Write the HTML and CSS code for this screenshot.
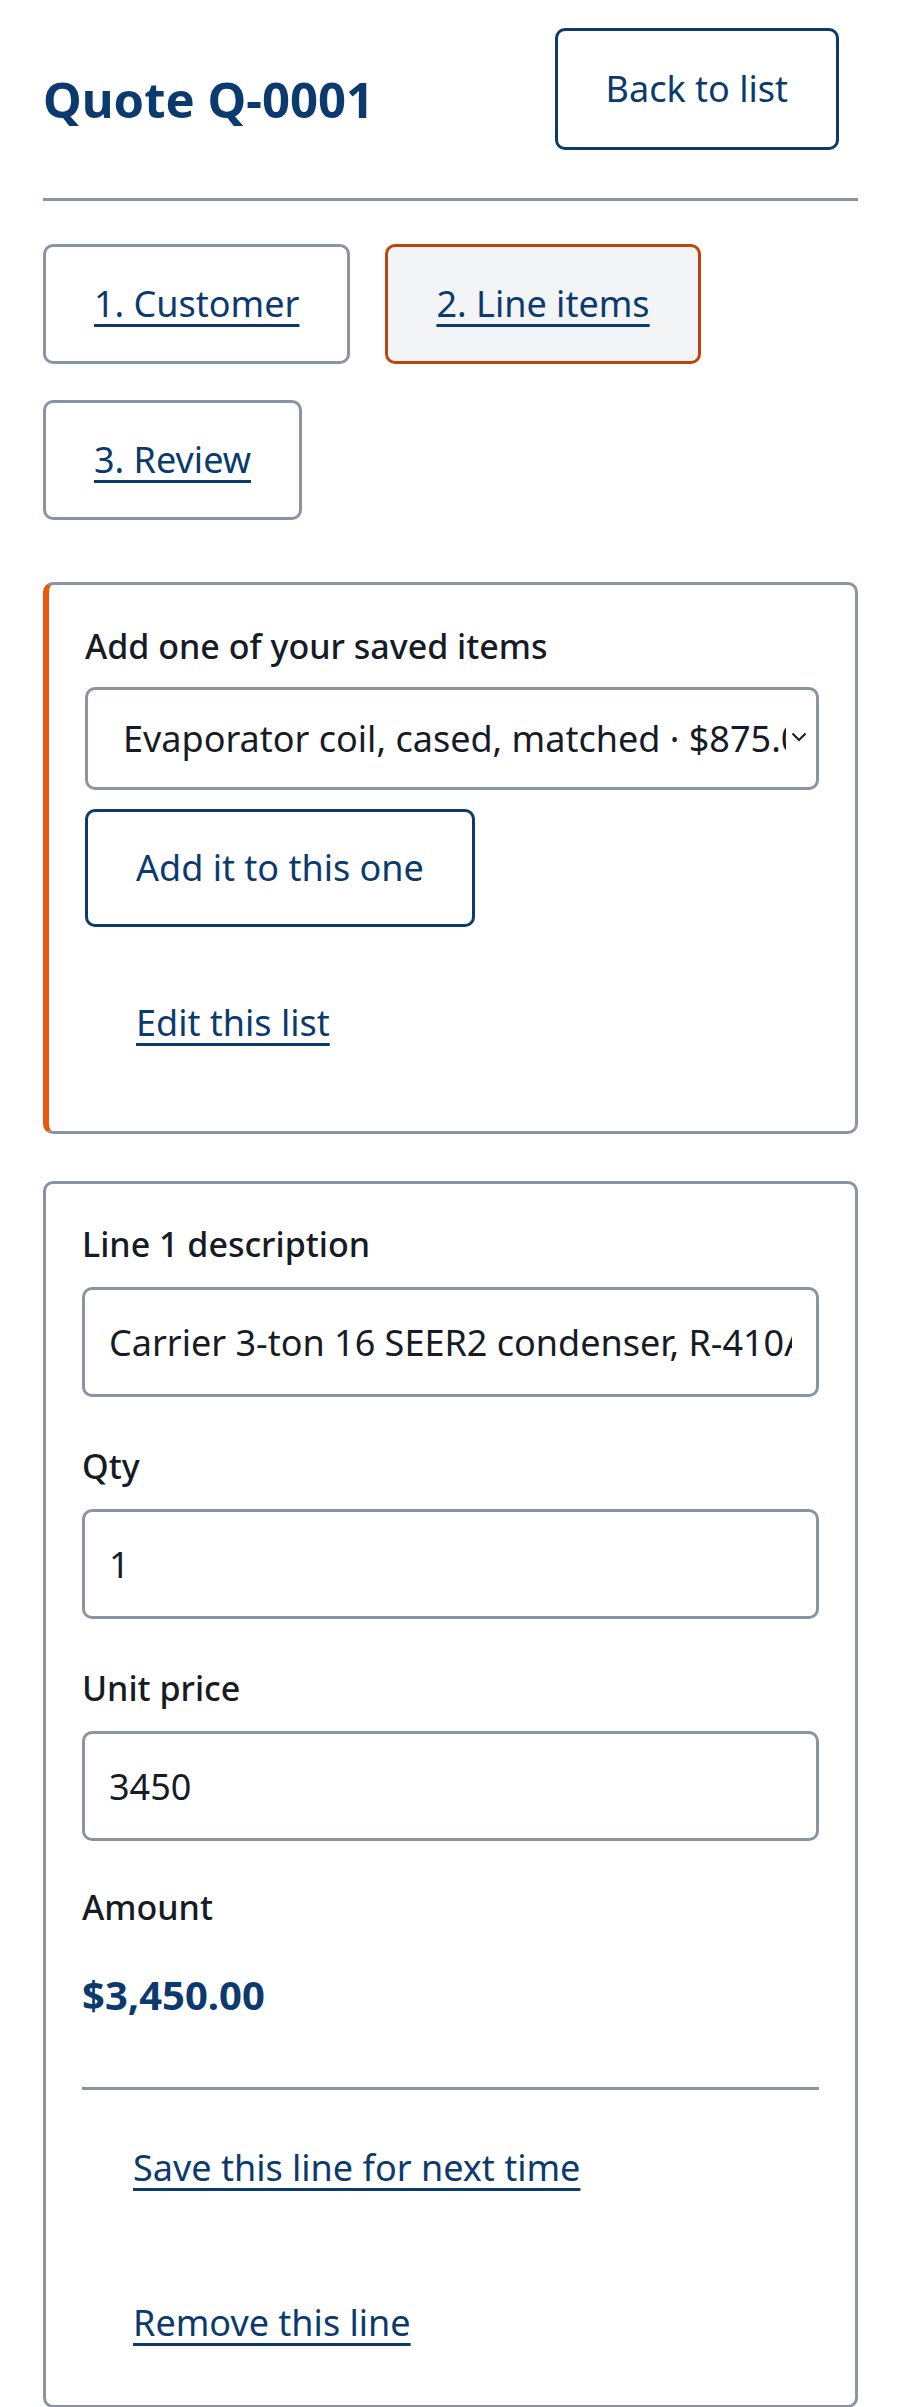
FILE: index.html
```html
<!DOCTYPE html>
<html lang="en">
<head>
    <meta charset="UTF-8">
    <meta name="viewport" content="width=device-width, initial-scale=1.0">
    <title>Quote Q-0001</title>
    <link rel="stylesheet" href="styles.css">
</head>
<body>
    <div class="page">
        <header class="top">
            <h1>Quote Q-0001</h1>
            <a class="btn back" href="#">Back to list</a>
        </header>

        <nav class="steps">
            <a class="btn tab" href="#">1. Customer</a>
            <a class="btn tab current" href="#">2. Line items</a>
            <a class="btn tab" href="#">3. Review</a>
        </nav>

        <section class="card saved">
            <label class="label" for="saved">Add one of your saved items</label>
            <div class="pick-wrap">
                <select id="saved" class="field pick">
                    <option>Evaporator coil, cased, matched · $875.00</option>
                    <option>Carrier 3-ton 16 SEER2 condenser · $3,450.00</option>
                    <option>Line set, 25 ft · $180.00</option>
                </select>
                <svg class="chevron" width="16" height="10" viewBox="0 0 16 10" aria-hidden="true">
                    <path d="M1.5 1.5 L8 8 L14.5 1.5" fill="none" stroke="#161b26" stroke-width="2"/>
                </svg>
            </div>
            <div class="actions">
                <button class="btn" type="button">Add it to this one</button>
                <a class="btn link" href="#">Edit this list</a>
            </div>
        </section>

        <section class="card line">
            <label class="label" for="desc1">Line 1 description</label>
            <input id="desc1" class="field" type="text" value="Carrier 3-ton 16 SEER2 condenser, R-410A, 10 yr parts warranty">

            <label class="label" for="qty1">Qty</label>
            <input id="qty1" class="field" type="text" value="1">

            <label class="label" for="price1">Unit price</label>
            <input id="price1" class="field last" type="text" value="3450">

            <div class="label">Amount</div>
            <div class="amount">$3,450.00</div>

            <div class="actions split">
                <a class="btn link" href="#">Save this line for next time</a>
                <a class="btn link" href="#">Remove this line</a>
            </div>
        </section>
    </div>
</body>
</html>
```

FILE: styles.css
```css
body {
    margin: 0;
    font-family: "Noto Sans", "Open Sans", Arial, sans-serif;
    font-size: 36px;
    line-height: 54px;
    color: #161b26;
    background-color: #fff;
}
.page {
    padding: 28px 42px 0 43px;
}
.top {
    display: flex;
    justify-content: space-between;
    align-items: flex-start;
    padding-bottom: 48px;
    border-bottom: 3px solid #8a94a2;
}
.top h1 {
    margin: 43px 0 0;
    font-size: 49px;
    line-height: 56px;
    font-weight: 700;
    color: #0b3b6e;
}
.btn {
    display: inline-block;
    box-sizing: border-box;
    padding: 29px 48px;
    border: 3px solid #0b3b6e;
    border-radius: 10px;
    background: #fff;
    color: #0b3b6e;
    font-family: inherit;
    font-size: 36px;
    line-height: 54px;
    text-decoration: none;
    cursor: pointer;
}
.back {
    padding-top: 31px;
    padding-bottom: 31px;
    margin-right: 19px;
}
.steps {
    display: flex;
    flex-wrap: wrap;
    gap: 36px 35px;
    margin-top: 43px;
}
.tab {
    padding-top: 30px;
    padding-bottom: 30px;
    border-color: #8a94a2;
    text-decoration: underline;
    text-decoration-thickness: 3px;
    text-underline-offset: 7px;
}
.tab.current {
    border-color: #c2410c;
    background: #f2f4f6;
}
.card {
    display: flex;
    flex-direction: column;
    border: 3px solid #8a94a2;
    border-radius: 10px;
    padding: 37px 36px 23px;
}
.saved {
    margin-top: 62px;
    border-left: 6px solid #ea580c;
    padding-top: 38px;
    padding-bottom: 49px;
}
.line {
    margin-top: 47px;
}
.label {
    font-size: 34px;
    line-height: 47px;
    font-weight: 500;
    color: #161b26;
}
.field {
    box-sizing: border-box;
    width: 100%;
    height: 110px;
    margin: 19px 0 46px;
    padding: 0 24px;
    border: 3px solid #8a94a2;
    border-radius: 10px;
    background: #fff;
    font-family: inherit;
    font-size: 36px;
    color: #161b26;
}
.field.last {
    margin-bottom: 43px;
}
.pick-wrap {
    position: relative;
    margin-top: 17px;
}
.pick {
    display: block;
    height: 103px;
    margin: 0;
    padding: 0 30px 0 35px;
    appearance: none;
    -webkit-appearance: none;
}
.chevron {
    position: absolute;
    right: 12px;
    top: 45px;
    pointer-events: none;
}
.actions {
    display: flex;
    flex-direction: column;
    align-items: flex-start;
    gap: 37px;
    margin-top: 19px;
}
.link {
    border-color: transparent;
    background: transparent;
    text-decoration: underline;
    text-decoration-thickness: 3px;
    text-underline-offset: 7px;
}
.amount {
    margin-top: 34px;
    font-size: 40px;
    line-height: 60px;
    font-weight: 700;
    color: #0b3b6e;
}
.split {
    margin-top: 62px;
    padding-top: 19px;
    border-top: 3px solid #8a94a2;
}
```
